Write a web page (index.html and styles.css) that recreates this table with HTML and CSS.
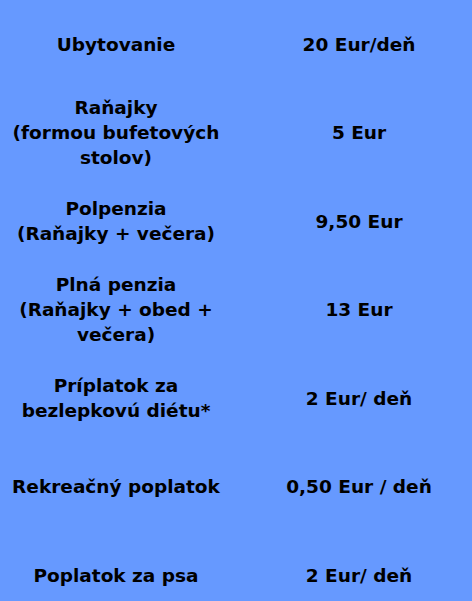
FILE: index.html
```html
<!DOCTYPE html>
<html lang="sk">
<head>
<meta charset="utf-8">
<title>Cenník</title>
<link rel="stylesheet" href="styles.css">
</head>
<body>
<div class="prices">
  <div class="row"><div class="name">Ubytovanie</div><div class="price">20 Eur/deň</div></div>
  <div class="row"><div class="name">Raňajky<br>(formou bufetových<br>stolov)</div><div class="price">5 Eur</div></div>
  <div class="row"><div class="name">Polpenzia<br>(Raňajky + večera)</div><div class="price">9,50 Eur</div></div>
  <div class="row"><div class="name">Plná penzia<br>(Raňajky + obed +<br>večera)</div><div class="price">13 Eur</div></div>
  <div class="row"><div class="name">Príplatok za<br>bezlepkovú diétu*</div><div class="price">2 Eur/ deň</div></div>
  <div class="row"><div class="name">Rekreačný poplatok</div><div class="price">0,50 Eur / deň</div></div>
  <div class="row"><div class="name">Poplatok za psa</div><div class="price">2 Eur/ deň</div></div>
</div>
</body>
</html>
```

FILE: styles.css
```css
html, body {
  margin: 0;
  padding: 0;
  background: #6699ff;
}
body {
  font-family: "DejaVu Sans", sans-serif;
  font-weight: bold;
  font-size: 18.5px;
  line-height: 25px;
  color: #000;
}
.prices {
  display: flex;
  flex-direction: column;
}
.row {
  display: grid;
  grid-template-columns: 232px 1fr;
  column-gap: 14px;
  height: 88.5px;
  align-items: center;
  text-align: center;
}
```
